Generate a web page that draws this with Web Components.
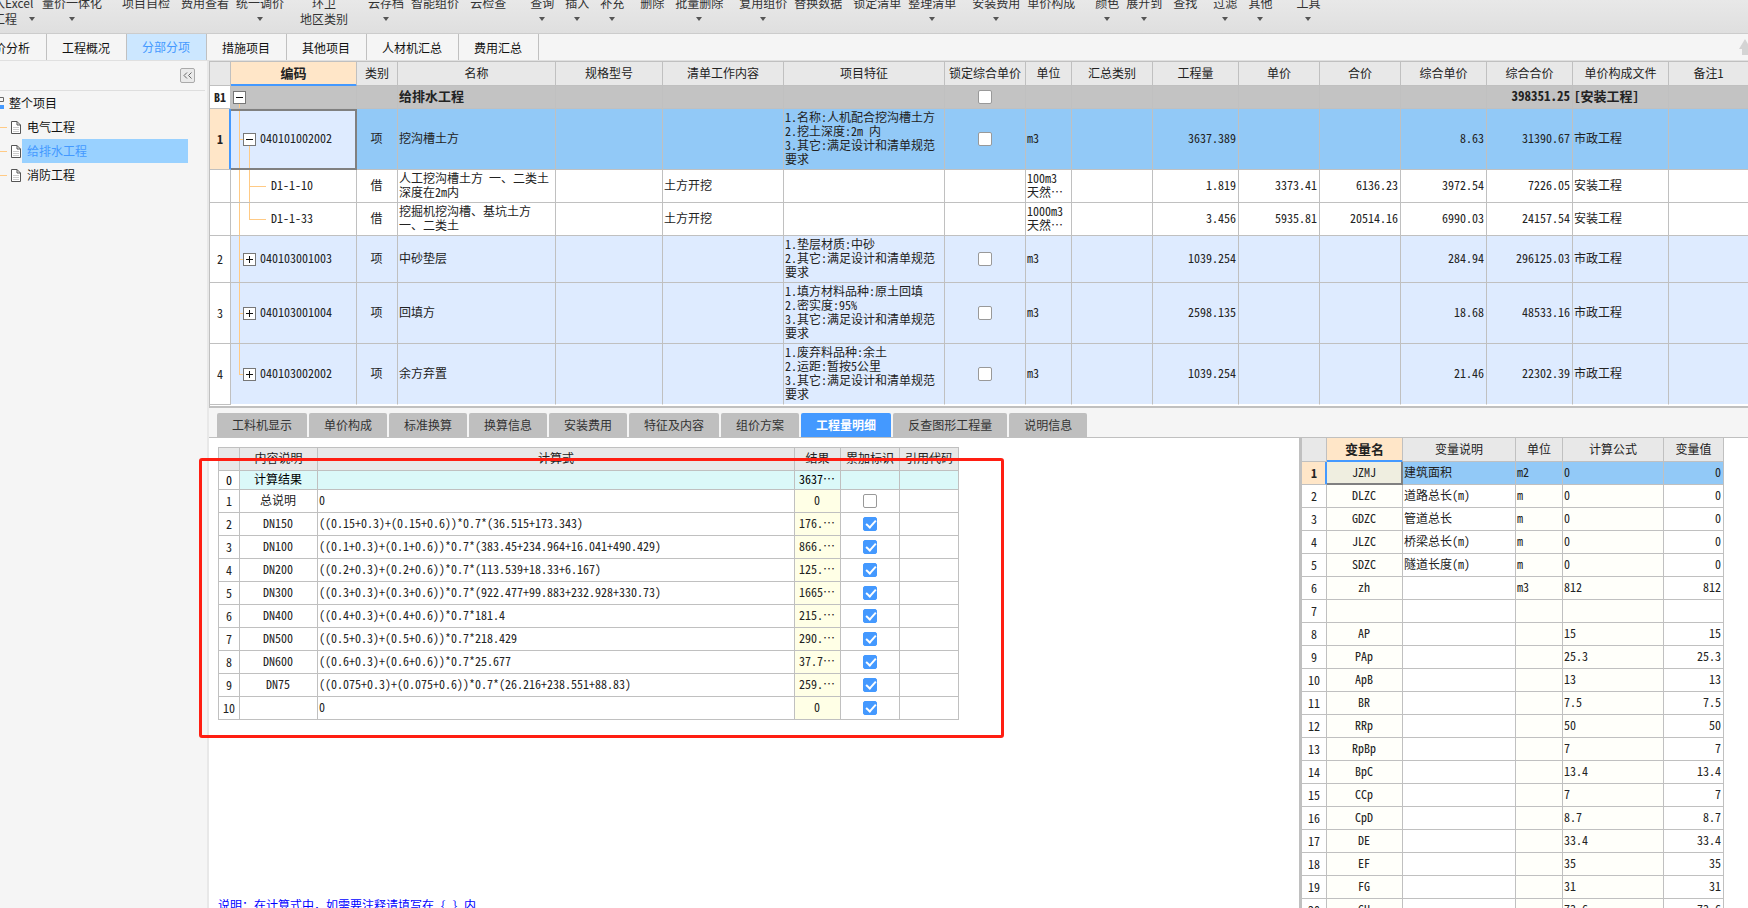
<!DOCTYPE html>
<html lang="zh-CN">
<head>
<meta charset="utf-8">
<title>分部分项</title>
<style>
html, body { margin: 0; height: 100%; overflow: hidden; }
body { font: 12px/14px "Noto Sans CJK SC", sans-serif; color: #222; background: #f5f5f5; }
</style>
</head>
<body>
<budget-app></budget-app>
<script>
const define = (name, css, render) => customElements.define(name, class extends HTMLElement {
  connectedCallback() {
    if (this.shadowRoot) return;
    const root = this.attachShadow({ mode: 'open' });
    const tpl = document.createElement('template');
    tpl.innerHTML = `<style>*{box-sizing:border-box}button{font:inherit;color:inherit;border:0;background:none;padding:0;margin:0;white-space:nowrap}${css}</style>${render(this)}`;
    root.append(tpl.content.cloneNode(true));
  }
});

/* Ribbon: label, gap before it, optional second line, optional drop-down arrow */
const ribbon = [
  ['入Excel', 'none', '工程', 1], ['量价一体化', 's', '', 1], ['项目自检', 'xl'], ['费用查看', 'm'], ['统一调价', 's', '', 1],
  ['环卫', 'l', '地区类别'], ['云存档', 'xl', '', 1], ['智能组价', 's'], ['云检查', 'm'],
  ['查询', 'xxl', '', 1], ['插入', 'm', '', 1], ['补充', 'm', '', 1], ['删除', 'l'], ['批量删除', 'm', '', 1],
  ['复用组价', 'l', '', 1], ['替换数据', 's'], ['锁定清单', 'm'], ['整理清单', 's', '', 1],
  ['安装费用', 'l', '', 1], ['单价构成', 's'], ['颜色', 'xl', '', 1], ['展开到', 's', '', 1], ['查找', 'm'],
  ['过滤', 'l', '', 1], ['其他', 'm', '', 1], ['工具', 'xxl', '', 1]
];
define('ribbon-bar', `
:host{display:block;height:34px;overflow:hidden;background:linear-gradient(#e8e8e8,#dfdfdf);border-bottom:1px solid #ccc;color:#333}
nav{display:flex;align-items:flex-start;margin:-5px 0 0 -7px}
button{display:flex;flex-direction:column;align-items:center;line-height:16px;flex:none}
.s{margin-left:7px}.m{margin-left:11px}.l{margin-left:16px}.xl{margin-left:20px}.xxl{margin-left:24px}
.low{display:flex;align-items:center;gap:12px;height:16px}
.none{align-items:flex-start}
i{width:0;border:3px solid transparent;border-top:4px solid #555;border-bottom:0;}
`, () => `<nav>${ribbon.map(([t, g, sub = '', arrow]) =>
  `<button class="${g}"><span>${t}</span><span class="low">${sub ? `<span>${sub}</span>` : ''}${arrow ? '<i></i>' : ''}</span></button>`).join('')}</nav>`);

define('module-tabs', `
:host{display:flex;height:27px;background:#f5f5f5;border-bottom:1px solid #e0e0e0;color:#111;overflow:hidden}
nav{display:flex;margin-left:-21px;flex:1}
button{padding:2px 16px 0 15px;border-right:1px solid #c0c0c0;flex:none}
.on{padding-top:0;background:#cce7ff;color:#4499ff}
svg{flex:none;margin:5px -3px 0 0}
`, () => `<nav>${['价分析', '工程概况', '分部分项', '措施项目', '其他项目', '人材机汇总', '费用汇总']
  .map(t => `<button${t === '分部分项' ? ' class="on" aria-current="page"' : ''}>${t}</button>`).join('')}</nav>
<svg width="12" height="16" viewBox="0 0 12 16" fill="#d4d4d4"><path d="M6 0l6 10H9v6H3v-6H0z"/></svg>`);

const doc = `<svg width="10" height="13" viewBox="0 0 10 13" fill="none" stroke="#555"><path fill="#fff" d="M.5.5h5.500l3.500 3.500v8.500h-9z"/><path d="M6 .5v3.500h3.500"/><path stroke="#ccc" d="M2 6.500h6M2 8.500h6M2 10.500h6"/></svg>`;
define('project-tree', `
:host{display:block;width:209px;flex:none;background:#f5f5f5;border-right:2px solid #e8e8e8;color:#111}
header{display:flex;justify-content:flex-end;align-items:center;height:30px;margin-right:2px;padding-right:10px;border-bottom:1px solid #dedede}
header button{width:15px;height:15px;border:1px solid #aaa;border-radius:2px;background:#eaeaea;display:grid;place-items:center}
ul{list-style:none;margin:0;padding:0}
li{display:flex;align-items:center;height:24px}
li button{height:24px;text-align:left}
.root{gap:5px}
.dash{width:7px;height:1px;background:#ffca85;margin-right:4px}
.leaf button{flex:1;padding-left:5px;margin:0 19px 0 1px}
.on button{background:#99d1ff;color:#4499ff}
`, () => `<header><button aria-label="收起"><svg width="9" height="7" viewBox="0 0 9 7" fill="none" stroke="#666"><path d="M4 .5l-3 3 3 3M8.500 .5l-3 3 3 3"/></svg></button></header>
<ul><li class="root"><svg width="4" height="14" viewBox="0 0 4 14"><path d="M0 1.500h3.500v4H0" fill="none" stroke="#666"/><path d="M0 9h4v4H0z" fill="#4499ff"/></svg><button>整个项目</button></li>
${['电气工程', '给排水工程', '消防工程'].map(t => `<li class="leaf${t === '给排水工程' ? ' on' : ''}"><span class="dash"></span>${doc}<button>${t}</button></li>`).join('')}</ul>`);

/* Shared look of every grid */
const grid = `
table{border-collapse:separate;border-spacing:0;table-layout:fixed;font-feature-settings:"hwid"}
th,td{border:0 solid #c0c0c0;border-width:0 1px 1px 0;padding:0 2px 2px 1px;font-weight:400;overflow:hidden;white-space:pre;text-align:left}
thead th{background:#e8e8e8;text-align:center;padding:0 0 2px}
thead th.cur{background:#ffe6c8;font-weight:700;font-size:13px;box-shadow:inset 0 -1px #4499ff;border-bottom-color:#4499ff}
tbody th{background:#fff;text-align:center;padding:0}
tbody th.cur{background:#ffe6c8;font-weight:700;box-shadow:inset -1px 0 #4499ff;border-right-color:#4499ff}
.r{text-align:right}.c{text-align:center}
.k{padding:0}
input{appearance:none;display:block;width:14px;height:14px;margin:0 auto;border:1px solid #999;border-radius:2px;background:#fff}
input:checked{background:#4499ff;border-color:#4499ff}
input:checked::after{content:"";display:block;width:4px;height:8px;margin:0 4px;border:solid #fff;border-width:0 2px 2px 0;transform:rotate(42deg)}
`;
const cols = w => `<colgroup>${w.map(n => `<col${n ? ` style="width:${n}px"` : ''}>`).join('')}</colgroup>`;
const check = (label, on) => `<input type="checkbox" aria-label="${label}"${on ? ' checked' : ''}>`;

const spec = '其它:满足设计和清单规范\n要求';
const bill = [
  { k: 'sum', n: 'B1', h: 23, name: '给排水工程', box: 1, ct: '398351.25', file: '[安装工程]' },
  { k: 'item sel', n: '1', h: 61, code: '040101002002', t: '项', name: '挖沟槽土方', f: '1.名称:人机配合挖沟槽土方\n2.挖土深度:2m 内\n3.' + spec, box: 1, u: 'm3', q: '3637.389', cp: '8.63', ct: '31390.67', file: '市政工程' },
  { k: 'sub', n: '', h: 33, code: 'D1-1-10', t: '借', name: '人工挖沟槽土方 一、二类土\n深度在2m内', w: '土方开挖', u: '100m3\n天然…', q: '1.819', p: '3373.41', a: '6136.23', cp: '3972.54', ct: '7226.05', file: '安装工程' },
  { k: 'sub end', n: '', h: 33, code: 'D1-1-33', t: '借', name: '挖掘机挖沟槽、基坑土方\n一、二类土', w: '土方开挖', u: '1000m3\n天然…', q: '3.456', p: '5935.81', a: '20514.16', cp: '6990.03', ct: '24157.54', file: '安装工程' },
  { k: 'item', n: '2', h: 47, code: '040103001003', t: '项', name: '中砂垫层', f: '1.垫层材质:中砂\n2.' + spec, box: 1, u: 'm3', q: '1039.254', cp: '284.94', ct: '296125.03', file: '市政工程' },
  { k: 'item', n: '3', h: 61, code: '040103001004', t: '项', name: '回填方', f: '1.填方材料品种:原土回填\n2.密实度:95%\n3.' + spec, box: 1, u: 'm3', q: '2598.135', cp: '18.68', ct: '48533.16', file: '市政工程' },
  { k: 'item last', n: '4', h: 61, code: '040103002002', t: '项', name: '余方弃置', f: '1.废弃料品种:余土\n2.运距:暂按5公里\n3.' + spec, box: 1, u: 'm3', q: '1039.254', cp: '21.46', ct: '22302.39', file: '市政工程' }
];
const toggle = open => `<button class="tg" aria-label="${open ? '折叠' : '展开'}"><svg width="11" height="11" viewBox="0 0 11 11" stroke="#111"><path d="M2 5.500h7${open ? '' : 'M5.500 2v7'}"/></svg></button>`;
define('bill-grid', grid + `
:host{display:block;background:#fff;border-top:1px solid #c0c0c0;border-left:1px solid #c0c0c0;border-bottom:2px solid #c0c0c0;padding-bottom:1px}
table{width:100%}
thead tr{height:24px}
.sum td{background-color:#c3c3c3;font-weight:700;font-size:13px}
.sum th{font-weight:700}
.item td{background-color:#deebff}
.item.sel td{background-color:#92c9f7}
.item.sel td.code{background-color:#deebff;box-shadow:inset 0 2px #808080,inset -1px 0 #808080,inset 0 -1px #808080;border-color:#808080}
.code{--g:linear-gradient(#ffca85,#ffca85);background-repeat:no-repeat;padding:0 2px}
.code div{display:flex;align-items:center;gap:4px;padding-left:10px}
.code span{padding-bottom:2px}
.sum .code div{padding-left:0}
.sum .code{background-image:var(--g);background-position:8px 100%;background-size:1px 50%}
.item .code{background-image:var(--g),var(--g);background-position:8px 0,8px 50%;background-size:1px 100%,6px 1px}
.item.sel .code{background-image:var(--g),var(--g),var(--g);background-position:8px 0,8px 50%,18px 100%;background-size:1px 100%,6px 1px,1px 50%}
.item.last .code{background-position:8px 0,8px 50%;background-size:1px 50%,6px 1px}
.sub .code{background-image:var(--g),var(--g),var(--g);background-position:8px 0,18px 0,18px 50%;background-size:1px 100%,1px 100%,17px 1px}
.sub.end .code{background-size:1px 100%,1px 50%,17px 1px}
.sub .code div{padding-left:38px}
.tg{width:13px;height:13px;border:1px solid #777;background:#fff;display:grid;place-items:center;flex:none}
tr > :last-child{border-right:0}
tbody tr:last-child td{border-bottom-color:#fff}
`, () => `<table>${cols([21, 126, 41, 158, 107, 121, 161, 81, 46, 81, 86, 81, 81, 86, 86, 96, 0])}
<thead><tr><th></th><th class="cur">编码</th>${['类别', '名称', '规格型号', '清单工作内容', '项目特征', '锁定综合单价', '单位', '汇总类别', '工程量', '单价', '合价', '综合单价', '综合合价', '单价构成文件', '备注1'].map(t => `<th>${t}</th>`).join('')}</tr></thead>
<tbody>${bill.map(r => `<tr class="${r.k}" style="height:${r.h}px"><th${r.n === '1' ? ' class="cur"' : ''}>${r.n}</th><td class="code"><div>${r.k.startsWith('sub') ? '' : toggle(r.n === 'B1' || r.n === '1')}${r.code ? `<span>${r.code}</span>` : ''}</div></td><td class="c">${r.t || ''}</td><td>${r.name}</td><td></td><td>${r.w || ''}</td><td>${r.f || ''}</td><td class="k">${r.box ? check('锁定综合单价 ' + r.n) : ''}</td><td>${r.u || ''}</td><td></td><td class="r">${r.q || ''}</td><td class="r">${r.p || ''}</td><td class="r">${r.a || ''}</td><td class="r">${r.cp || ''}</td><td class="r">${r.ct}</td><td>${r.file}</td><td></td></tr>`).join('')}</tbody></table>`);

define('detail-tabs', `
:host{display:flex;align-items:flex-end;gap:2px;height:30px;padding-left:8px;background:#f5f5f5;border-bottom:1px solid #c0c0c0;color:#333}
button{height:24px;padding:0 15px;background:#bfbfbf;border-radius:2px 2px 0 0}
.on{background:#4499ff;color:#fff;font-weight:700}
`, () => ['工料机显示', '单价构成', '标准换算', '换算信息', '安装费用', '特征及内容', '组价方案', '工程量明细', '反查图形工程量', '说明信息']
  .map(t => `<button${t === '工程量明细' ? ' class="on" aria-current="true"' : ''}>${t}</button>`).join(''));

const quantities = [
  ['计算结果', '', '3637…', null], ['总说明', '0', '0', 0],
  ['DN150', '((0.15+0.3)+(0.15+0.6))*0.7*(36.515+173.343)', '176.…', 1],
  ['DN100', '((0.1+0.3)+(0.1+0.6))*0.7*(383.45+234.964+16.041+490.429)', '866.…', 1],
  ['DN200', '((0.2+0.3)+(0.2+0.6))*0.7*(113.539+18.33+6.167)', '125.…', 1],
  ['DN300', '((0.3+0.3)+(0.3+0.6))*0.7*(922.477+99.883+232.928+330.73)', '1665…', 1],
  ['DN400', '((0.4+0.3)+(0.4+0.6))*0.7*181.4', '215.…', 1],
  ['DN500', '((0.5+0.3)+(0.5+0.6))*0.7*218.429', '290.…', 1],
  ['DN600', '((0.6+0.3)+(0.6+0.6))*0.7*25.677', '37.7…', 1],
  ['DN75', '((0.075+0.3)+(0.075+0.6))*0.7*(26.216+238.551+88.83)', '259.…', 1],
  ['', '0', '0', 1]
];
define('quantity-grid', grid + `
:host{display:block;width:741px;border:solid #c0c0c0;border-width:1px 0 0 1px}
table{width:100%}
tr{height:23px}
.total{height:19px;color:#000}
.total td{background:#dbf9f9}
.res{background:#ffffe6;text-align:center}
`, () => `<table>${cols([21, 78, 0, 46, 59, 59])}<thead><tr><th></th>${['内容说明', '计算式', '结果', '累加标识', '引用代码'].map(t => `<th>${t}</th>`).join('')}</tr></thead>
<tbody>${quantities.map(([a, b, c, on], i) => `<tr${i ? '' : ' class="total"'}><th>${i}</th><td class="c">${a}</td><td>${b}</td><td class="res">${c}</td><td class="k">${on === null ? '' : check('累加标识 ' + i, on)}</td><td></td></tr>`).join('')}</tbody></table>`);

const variables = [
  ['JZMJ', '建筑面积', 'm2', '0'], ['DLZC', '道路总长(m)', 'm', '0'], ['GDZC', '管道总长', 'm', '0'], ['JLZC', '桥梁总长(m)', 'm', '0'],
  ['SDZC', '隧道长度(m)', 'm', '0'], ['zh', '', 'm3', '812'], ['', '', '', ''], ['AP', '', '', '15'], ['PAp', '', '', '25.3'],
  ['ApB', '', '', '13'], ['BR', '', '', '7.5'], ['RRp', '', '', '50'], ['RpBp', '', '', '7'], ['BpC', '', '', '13.4'],
  ['CCp', '', '', '7'], ['CpD', '', '', '8.7'], ['DE', '', '', '33.4'], ['EF', '', '', '35'], ['FG', '', '', '31'], ['GH', '', '', '73.6']
];
define('variable-grid', grid + `
:host{display:block;flex:none;width:449px;padding-right:24px;border-left:3px solid #c0c0c0;overflow:hidden}
table{width:100%}
tr{height:23px}
thead tr{height:24px}
td:nth-child(2),td:nth-child(4),td:nth-child(5){background:#fffffa}
.sel td:nth-child(n){background:#92c9f7}
.sel td:nth-child(2){background:#efeee0;box-shadow:inset -1px -1px #808080;border-color:#808080}
`, () => `<table>${cols([25, 76, 113, 47, 101, 0])}<thead><tr><th></th><th class="cur">变量名</th>${['变量说明', '单位', '计算公式', '变量值'].map(t => `<th>${t}</th>`).join('')}</tr></thead>
<tbody>${variables.map(([a, b, u, f], i) => `<tr${i ? '' : ' class="sel"'}><th${i ? '' : ' class="cur"'}>${i + 1}</th><td class="c">${a}</td><td>${b}</td><td>${u}</td><td>${f}</td><td class="r">${f}</td></tr>`).join('')}</tbody></table>`);

define('detail-pane', `
:host{display:flex;flex:1;min-height:0;background:#fff}
section{position:relative;flex:1;min-width:0;padding:9px 0 0 9px}
p{margin:178px 0 0;color:#00f}
p span{font-feature-settings:"hwid"}
.mark{position:absolute;left:-10px;top:20px;width:805px;height:280px;border:3px solid #ff1e12;border-radius:3px;pointer-events:none}
`, () => `<section><quantity-grid></quantity-grid><p>说明：在计算式中，如需要注释请填写在<span> { } </span>内</p><div class="mark"></div></section><variable-grid></variable-grid>`);

define('budget-app', `
:host{display:flex;flex-direction:column;height:100vh}
.body{display:flex;flex:1;min-height:0}
main{display:flex;flex-direction:column;flex:1;min-width:0}
`, () => `<ribbon-bar></ribbon-bar><module-tabs></module-tabs><div class="body"><project-tree></project-tree><main><bill-grid></bill-grid><detail-tabs></detail-tabs><detail-pane></detail-pane></main></div>`);
</script>
</body>
</html>
